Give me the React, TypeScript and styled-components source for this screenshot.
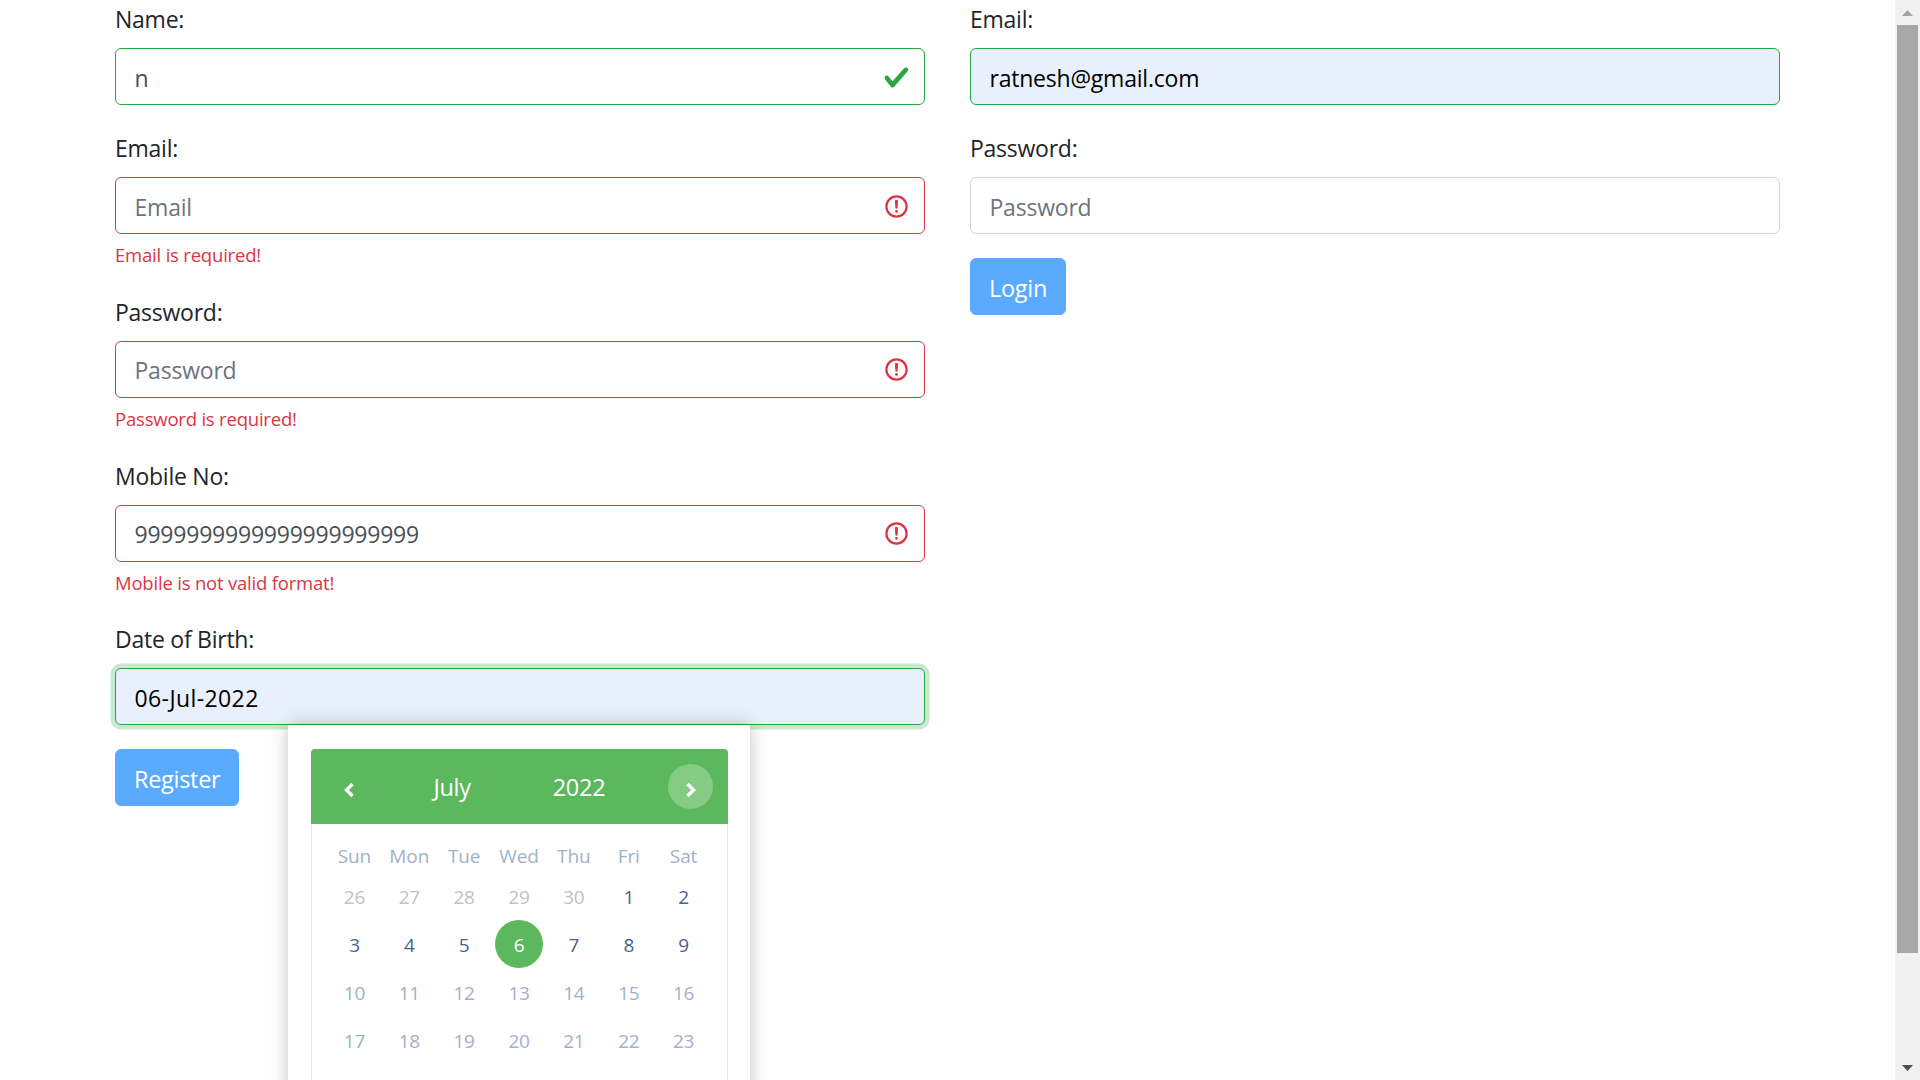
import React from "react";
import styled, { createGlobalStyle } from "styled-components";

const Global = createGlobalStyle`
  html, body { margin: 0; padding: 0; height: 100%; overflow: hidden; background: #fff; }
  body { font-family: "Open Sans", "Liberation Sans", sans-serif; color: #212529; }
  * { box-sizing: border-box; }
`;

const Screen = styled.div`
  display: flex;
  width: 1920px;
  height: 1080px;
  overflow: hidden;
`;

const Page = styled.main`
  flex: 1;
  min-width: 0;
  padding: 0 115px;
  display: grid;
  grid-template-columns: 810px 810px;
  column-gap: 45px;
  align-content: start;
`;

const Form = styled.form`
  display: flex;
  flex-direction: column;
  align-items: flex-start;
`;

const Group = styled.div`
  position: relative;
  width: 100%;
  margin-bottom: 24px;
`;

const Label = styled.label`
  display: block;
  height: 36px;
  margin-bottom: 12px;
  font-size: 23px;
  line-height: 38px;
  letter-spacing: -0.25px;
  color: #212529;
`;

const Field = styled.div`
  position: relative;
  width: 100%;
`;

type Tone = "plain" | "valid" | "invalid";
const toneColor: Record<Tone, string> = { plain: "#ced4da", valid: "#28a745", invalid: "#dc3545" };

const Input = styled.input<{ $tone: Tone; $filled?: boolean; $focus?: boolean }>`
  display: block;
  width: 100%;
  height: 57px;
  padding: 2px 18px 0 18.5px;
  border: 1px solid ${(p) => toneColor[p.$tone]};
  border-radius: 6px;
  outline: none;
  font-family: inherit;
  font-size: 23px;
  letter-spacing: -0.22px;
  color: ${(p) => (p.$filled ? "#000" : "#495057")};
  background: ${(p) => (p.$filled ? "#e8f0fe" : "#fff")};
  box-shadow: ${(p) => (p.$focus ? "0 0 0 4.5px rgba(40,167,69,.25)" : "none")};
  &::placeholder { color: #6c757d; opacity: 1; }
`;

const DateInput = styled(Input)`
  letter-spacing: 0.4px;
`;

const StateIcon = styled.svg`
  position: absolute;
  top: 15.5px;
  right: 15px;
  width: 27px;
  height: 27px;
`;

const Feedback = styled.div`
  margin-top: 6px;
  height: 28.8px;
  font-size: 18.5px;
  line-height: 30.5px;
  letter-spacing: -0.2px;
  color: #dc3545;
`;

const PrimaryButton = styled.button`
  height: 57px;
  padding: 2px 18px 0;
  border: 1px solid #5aabff;
  border-radius: 6px;
  background: #5aabff;
  color: #fff;
  font-family: inherit;
  font-size: 23.5px;
  letter-spacing: -0.3px;
`;

const Popup = styled.div`
  position: absolute;
  top: 100%;
  left: 173px;
  z-index: 5;
  width: 462px;
  padding: 24px 22px 24px 23px;
  background: #fff;
  box-shadow: 0 0 16px rgba(0, 0, 0, 0.25);
`;

const CalHead = styled.div`
  display: grid;
  grid-template-columns: 45px 162px 1fr 45px;
  align-items: center;
  height: 75px;
  padding: 0 15px;
  border-radius: 4px 4px 0 0;
  background: #5cb85c;
  color: #fff;
  font-size: 23.5px;
  letter-spacing: -0.3px;
`;

const NavButton = styled.span<{ $active?: boolean }>`
  display: flex;
  align-items: center;
  justify-content: center;
  width: 45px;
  height: 45px;
  border-radius: 50%;
  background: ${(p) => (p.$active ? "rgba(255,255,255,.25)" : "transparent")};
`;

const ChevronIcon = styled.svg`
  margin-top: 6px;
  width: 14px;
  height: 18px;
`;

const HeadLabel = styled.span<{ $inset?: number }>`
  padding-right: ${(p) => p.$inset ?? 0}px;
  text-align: center;
`;

const CalBody = styled.div`
  padding: 12px 16px 60px 15px;
  border: 1px solid #e6e6e6;
  border-top: 0;
`;

const Week = styled.div`
  display: grid;
  grid-template-columns: repeat(7, 1fr);
`;

const DayName = styled.div`
  height: 36px;
  line-height: 40px;
  text-align: center;
  font-size: 19px;
  letter-spacing: -0.1px;
  color: #9fb1c9;
`;

type DayKind = "muted" | "dark" | "soft";
const dayColor: Record<DayKind, string> = { muted: "#c2c2c2", dark: "#48648a", soft: "#9fb1c9" };

const DayCell = styled.div`
  display: flex;
  justify-content: center;
  height: 48px;
`;

const DayNum = styled.span<{ $kind: DayKind; $selected?: boolean }>`
  width: 48px;
  height: 48px;
  border-radius: 50%;
  line-height: 50px;
  text-align: center;
  font-size: 19px;
  letter-spacing: -0.3px;
  color: ${(p) => (p.$selected ? "#fff" : dayColor[p.$kind])};
  background: ${(p) => (p.$selected ? "#5cb85c" : "transparent")};
`;

const ScrollBar = styled.aside`
  flex: none;
  width: 25px;
  height: 100%;
  display: flex;
  flex-direction: column;
  background: #f1f1f1;
`;

const ScrollArrow = styled.div`
  flex: none;
  height: 25px;
  display: flex;
  align-items: center;
  justify-content: center;
`;

const ScrollTrack = styled.div`
  flex: 1;
  padding: 0 2px 102px;
  display: flex;
`;

const ScrollThumb = styled.div`
  flex: 1;
  background: #a8a8a8;
`;

const ValidIcon = () => (
  <StateIcon viewBox="0 0 8 8">
    <path fill="#28a745" d="M2.3 6.73L.6 4.53c-.4-1.04.46-1.4 1.1-.8l1.1 1.4 3.4-3.8c.6-.63 1.6-.27 1.2.7l-4 4.6c-.43.5-.8.4-1.1.1z" />
  </StateIcon>
);

const InvalidIcon = () => (
  <StateIcon viewBox="0 0 12 12" fill="none" stroke="#dc3545">
    <circle cx="6" cy="6" r="4.5" />
    <path strokeLinejoin="round" d="M5.8 3.6h.4L6 6.5z" />
    <circle cx="6" cy="8.2" r=".6" fill="#dc3545" stroke="none" />
  </StateIcon>
);

const Chevron = ({ left }: { left?: boolean }) => (
  <ChevronIcon viewBox="0 0 14 18">
    <path
      d={left ? "M10.5 3 L4.5 9 L10.5 15" : "M3.5 3 L9.5 9 L3.5 15"}
      fill="none"
      stroke="#fff"
      strokeWidth="3.4"
    />
  </ChevronIcon>
);

const dayNames = ["Sun", "Mon", "Tue", "Wed", "Thu", "Fri", "Sat"];
type Day = { n: number; k: DayKind; s?: boolean };
const mk = (arr: number[], k: DayKind): Day[] => arr.map((n) => ({ n, k }));
const weeks: Day[][] = [
  [...mk([26, 27, 28, 29, 30], "muted"), ...mk([1, 2], "dark")],
  [...mk([3, 4, 5], "dark"), { n: 6, k: "dark", s: true }, ...mk([7, 8, 9], "dark")],
  mk([10, 11, 12, 13, 14, 15, 16], "soft"),
  mk([17, 18, 19, 20, 21, 22, 23], "soft"),
];

const Calendar = () => (
  <Popup>
    <CalHead>
      <NavButton><Chevron left /></NavButton>
      <HeadLabel>July</HeadLabel>
      <HeadLabel $inset={43}>2022</HeadLabel>
      <NavButton $active><Chevron /></NavButton>
    </CalHead>
    <CalBody>
      <Week>
        {dayNames.map((d) => <DayName key={d}>{d}</DayName>)}
      </Week>
      {weeks.map((w, i) => (
        <Week key={i}>
          {w.map((d) => (
            <DayCell key={d.n}>
              <DayNum $kind={d.k} $selected={d.s}>{d.n}</DayNum>
            </DayCell>
          ))}
        </Week>
      ))}
    </CalBody>
  </Popup>
);

export default function App() {
  return (
    <Screen>
      <Global />
      <Page>
        <Form>
          <Group>
            <Label>Name:</Label>
            <Field>
              <Input $tone="valid" defaultValue="n" />
              <ValidIcon />
            </Field>
          </Group>
          <Group>
            <Label>Email:</Label>
            <Field>
              <Input $tone="invalid" placeholder="Email" />
              <InvalidIcon />
            </Field>
            <Feedback>Email is required!</Feedback>
          </Group>
          <Group>
            <Label>Password:</Label>
            <Field>
              <Input $tone="invalid" placeholder="Password" />
              <InvalidIcon />
            </Field>
            <Feedback>Password is required!</Feedback>
          </Group>
          <Group>
            <Label>Mobile No:</Label>
            <Field>
              <Input $tone="invalid" defaultValue="9999999999999999999999" />
              <InvalidIcon />
            </Field>
            <Feedback>Mobile is not valid format!</Feedback>
          </Group>
          <Group>
            <Label>Date of Birth:</Label>
            <Field>
              <DateInput $tone="valid" $filled $focus defaultValue="06-Jul-2022" />
              <Calendar />
            </Field>
          </Group>
          <PrimaryButton type="button">Register</PrimaryButton>
        </Form>
        <Form>
          <Group>
            <Label>Email:</Label>
            <Field>
              <Input $tone="valid" $filled defaultValue="ratnesh@gmail.com" />
            </Field>
          </Group>
          <Group>
            <Label>Password:</Label>
            <Field>
              <Input $tone="plain" placeholder="Password" />
            </Field>
          </Group>
          <PrimaryButton type="button">Login</PrimaryButton>
        </Form>
      </Page>
      <ScrollBar>
        <ScrollArrow>
          <svg width="11" height="6" viewBox="0 0 11 6"><path d="M5.5 0 L11 6 H0 Z" fill="#a3a3a3" /></svg>
        </ScrollArrow>
        <ScrollTrack><ScrollThumb /></ScrollTrack>
        <ScrollArrow>
          <svg width="11" height="6" viewBox="0 0 11 6"><path d="M0 0 H11 L5.5 6 Z" fill="#505050" /></svg>
        </ScrollArrow>
      </ScrollBar>
    </Screen>
  );
}
